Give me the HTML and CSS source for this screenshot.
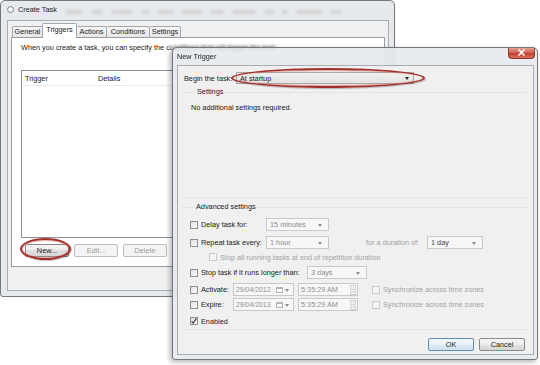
FILE: index.html
```html
<!DOCTYPE html>
<html lang="en">
<head>
	<meta charset="UTF-8">
	<title>Create Task - New Trigger</title>
	<link rel="stylesheet" href="styles.css">
</head>
<body>
<div class="desk">

	<div class="win create">
		<div class="titlebar">
			<span class="app-icon"></span>
			<span class="title">Create Task</span>
			<div class="glass-noise"><i></i><i></i><i></i><i></i><i></i><i></i><i></i><i></i><i></i><i></i><i></i><i></i></div>
		</div>
		<div class="client">
			<ul class="tabs">
				<li class="tab t-general">General</li>
				<li class="tab t-triggers on">Triggers</li>
				<li class="tab t-actions">Actions</li>
				<li class="tab t-conditions">Conditions</li>
				<li class="tab t-settings">Settings</li>
			</ul>
			<div class="tab-panel">
				<p class="hint">When you create a task, you can specify the conditions that will trigger the task.</p>
				<div class="list">
					<div class="list-head"><span class="col-trigger">Trigger</span><span class="col-details">Details</span><span>Status</span></div>
				</div>
				<div class="list-btns">
					<button class="btn">New...</button>
					<button class="btn off">Edit...</button>
					<button class="btn off">Delete</button>
				</div>
			</div>
		</div>
	</div>

	<div class="glass-edge"></div>

	<div class="win trigger">
		<div class="titlebar"><span class="title">New Trigger</span></div>
		<span class="close-btn">
			<svg viewBox="0 0 27 11" width="27" height="11"><path d="M10.5 2.5 L16.5 8.5 M16.5 2.5 L10.5 8.5" stroke="#fff" stroke-width="1.6" fill="none"/></svg>
		</span>
		<div class="client">
			<div class="begin-row">
				<span class="begin-label">Begin the task:</span>
				<div class="combo combo-begin"><span>At startup</span><i class="arrow"></i></div>
			</div>

			<fieldset class="group group-settings">
				<legend>Settings</legend>
				<p class="note">No additional settings required.</p>
			</fieldset>

			<fieldset class="group group-adv">
				<legend>Advanced settings</legend>

				<div class="row r1">
					<label class="opt lab-76"><span class="check"></span>Delay task for:</label>
					<div class="combo off w63"><span>15 minutes</span><i class="arrow"></i></div>
				</div>

				<div class="row r2">
					<label class="opt lab-76"><span class="check"></span>Repeat task every:</label>
					<div class="combo off w63"><span>1 hour</span><i class="arrow"></i></div>
					<span class="dim duration">for a duration of:</span>
					<div class="combo off w56"><span class="dark">1 day</span><i class="arrow"></i></div>
				</div>

				<div class="row r3">
					<label class="opt sub dim"><span class="check off"></span>Stop all running tasks at end of repetition duration</label>
				</div>

				<div class="row r4">
					<label class="opt lab-117"><span class="check"></span>Stop task if it runs longer than:</label>
					<div class="combo off w60"><span>3 days</span><i class="arrow"></i></div>
				</div>

				<div class="row r5">
					<label class="opt lab-43"><span class="check"></span>Activate:</label>
					<div class="field date"><span>29/04/2012</span><i class="cal"></i><i class="arrow"></i></div>
					<div class="field time"><span>5:35:29 AM</span><i class="spin"><b></b><b></b></i></div>
					<label class="opt sync dim"><span class="check off"></span>Synchronize across time zones</label>
				</div>

				<div class="row r6">
					<label class="opt lab-43"><span class="check"></span>Expire:</label>
					<div class="field date"><span>29/04/2013</span><i class="cal"></i><i class="arrow"></i></div>
					<div class="field time"><span>5:35:29 AM</span><i class="spin"><b></b><b></b></i></div>
					<label class="opt sync dim"><span class="check off"></span>Synchronize across time zones</label>
				</div>

				<div class="row r7">
					<label class="opt"><span class="check"><svg viewBox="0 0 8 8" width="8" height="8"><path d="M1.6 4.3 L3.2 6.1 L6.4 1.4" fill="none" stroke="#333" stroke-width="1.1"/></svg></span>Enabled</label>
				</div>
			</fieldset>

			<div class="dlg-btns">
				<button class="btn default">OK</button>
				<button class="btn">Cancel</button>
			</div>
		</div>
	</div>

	<span class="mark mark-new"></span>
	<span class="mark mark-begin"></span>
</div>
</body>
</html>
```

FILE: styles.css
```css
* {
	margin: 0;
	padding: 0;
	box-sizing: border-box;
}

body {
	width: 540px;
	height: 365px;
	overflow: hidden;
	background: #fff;
	font-family: 'Liberation Sans', Arial, sans-serif;
	font-size: 7.3px;
	color: #1a1a1a;
}

.desk {
	position: relative;
	width: 540px;
	height: 365px;
}

/* windows */
.win {
	position: absolute;
	display: flex;
	flex-direction: column;
	border: 1px solid #74787c;
	border-radius: 5px 5px 3px 3px;
	background: #e7eaed;
}

.titlebar {
	position: relative;
	display: flex;
	align-items: center;
	flex: none;
}

.title {
	white-space: nowrap;
	color: #1a1a1a;
}

.client {
	flex: 1;
	border: 1px solid #a9adb2;
	background: #f0f0f0;
}

/* create task */
.create {
	left: 0;
	top: 0;
	width: 395px;
	height: 297px;
	padding: 0 5px 5px 6px;
}

.create .titlebar {
	height: 19px;
	padding-bottom: 3px;
}

.app-icon {
	width: 7px;
	height: 7px;
	border: 1px solid #8a8a8a;
	border-radius: 50%;
	background: radial-gradient(circle, #fff 30%, #d0d0d0);
	margin-right: 4px;
}

.glass-noise {
	position: absolute;
	left: 58px;
	top: 9px;
	display: flex;
	gap: 8px;
}

.glass-noise i {
	display: block;
	height: 4px;
	width: 18px;
	border-radius: 2px;
	background: #d3d3d3;
	filter: blur(1.6px);
}

.glass-noise i:nth-child(2) { width: 12px; }
.glass-noise i:nth-child(3) { width: 22px; }
.glass-noise i:nth-child(4) { width: 9px; }
.glass-noise i:nth-child(5) { width: 16px; }
.glass-noise i:nth-child(6) { width: 20px; }
.glass-noise i:nth-child(7) { width: 14px; }
.glass-noise i:nth-child(8) { width: 24px; }
.glass-noise i:nth-child(9) { width: 10px; }
.glass-noise i:nth-child(10) { width: 6px; }
.glass-noise i:nth-child(11) { width: 26px; }
.glass-noise i:nth-child(12) { width: 12px; }

.create .client {
	display: flex;
	flex-direction: column;
	padding: 3px 3px 0 3px;
}

.tabs {
	list-style: none;
	display: flex;
	align-items: flex-end;
	height: 13px;
	padding-left: 1px;
}

.tab {
	height: 11px;
	line-height: 10px;
	text-align: center;
	border: 1px solid #a3a7ac;
	border-bottom: 0;
	border-left-width: 0;
	border-radius: 2px 2px 0 0;
	background: linear-gradient(#f7f7f7, #e6e6e6);
	white-space: nowrap;
}

.t-general { width: 31px; border-left-width: 1px; }
.t-triggers { width: 35px; }
.t-actions { width: 30px; }
.t-conditions { width: 43px; }
.t-settings { width: 31px; }

.tab.on {
	position: relative;
	z-index: 1;
	height: 15px;
	margin-bottom: -1px;
	line-height: 12px;
	background: #fff;
	border-left-width: 1px;
	margin-left: -1px;
}

.tab-panel {
	height: 230px;
	border: 1px solid #9a9ea3;
	background: #fff;
	padding: 5px 9px 0 9px;
}

.hint {
	line-height: 10px;
	white-space: nowrap;
}

.list {
	margin-top: 17px;
	height: 168px;
	border: 1px solid #8c9096;
	background: #fff;
}

.list-head {
	display: flex;
	height: 15px;
	align-items: center;
	padding-left: 3px;
	border-bottom: 1px solid #ececec;
}

.col-trigger { width: 73px; }
.col-details { width: 200px; }

.list-btns {
	display: flex;
	gap: 5px;
	margin: 6px 0 0 4px;
}

.btn {
	width: 44px;
	height: 13px;
	font: inherit;
	color: #1e1e1e;
	border: 1px solid #8a8a8a;
	border-radius: 2px;
	background: linear-gradient(#f6f6f6, #ececec 50%, #e0e0e0 50%, #d8d8d8);
}

.btn.off {
	color: #9d9d9d;
	border-color: #bdbdbd;
	background: #f4f4f4;
}

.btn.default {
	border-color: #5f8db5;
	background: linear-gradient(#f4f9fc, #e8f1f8 50%, #dbe8f2 50%, #d2e2ee);
}

/* glass glow over the text behind the dialog */
.glass-edge {
	position: absolute;
	left: 168px;
	top: 42px;
	width: 110px;
	height: 6px;
	backdrop-filter: blur(1.5px);
}

/* new trigger */
.trigger {
	left: 172px;
	top: 47px;
	width: 366px;
	height: 313px;
	padding: 0 3px 4px 4px;
	background: rgba(228, 232, 236, .86);
	backdrop-filter: blur(1.6px);
	box-shadow: -2px 2px 5px rgba(0, 0, 0, .3);
}

.trigger .titlebar {
	height: 17px;
}

.close-btn {
	position: absolute;
	left: 335px;
	top: 0;
	width: 27px;
	height: 11px;
	border: 1px solid #8b3a33;
	border-top: 0;
	border-radius: 0 0 4px 4px;
	background: linear-gradient(#e6a195, #cf5a49 50%, #c03c2a 51%, #d7705c);
}

.close-btn svg {
	display: block;
	margin: -1px 0 0 -1px;
}

.trigger .client {
	display: flex;
	flex-direction: column;
	padding: 6px 6px 0 3px;
}

.begin-row {
	display: flex;
	align-items: center;
	height: 12px;
	padding-left: 3px;
}

.begin-label {
	width: 52px;
	white-space: nowrap;
}

.combo {
	position: relative;
	display: flex;
	align-items: center;
	height: 13px;
	padding-left: 3px;
	border: 1px solid #abadb3;
	background: #fff;
	white-space: nowrap;
}

.combo .arrow,
.field .arrow {
	position: absolute;
	right: 6px;
	top: 5px;
	width: 0;
	height: 0;
	border-left: 2.5px solid transparent;
	border-right: 2.5px solid transparent;
	border-top: 3px solid #222;
}

.combo-begin {
	width: 178px;
	height: 12px;
	border-color: #a9a9a9;
	background: linear-gradient(#f0f0f0, #e3e3e3);
}

.combo-begin .arrow {
	top: 4px;
	right: 4px;
}

.combo.off {
	color: #8a8a8a;
	border-color: #c7c9cc;
	background: #f7f7f7;
}

.combo.off .arrow,
.field .arrow {
	border-top-color: #8c8c8c;
}

.combo .dark {
	color: #444;
}

.w63 { width: 63px; }
.w60 { width: 60px; }
.w56 { width: 56px; }

.group {
	border: 1px solid #e1e3e6;
	border-left-color: transparent;
	border-right-color: transparent;
	min-inline-size: 0;
}

.group legend {
	margin-left: 4px;
	padding: 0 2px;
	line-height: 10px;
}

.group-settings {
	margin-top: 3px;
	height: 111px;
	padding: 6px 0 0 9px;
}

.note {
	line-height: 10px;
}

.group-adv {
	margin-top: 4px;
	padding: 6px 0 3px 8px;
}

.row {
	display: flex;
	align-items: center;
	height: 13px;
}

.r2 { margin-top: 5px; }
.r3 { margin-top: 3px; height: 10px; }
.r4 { margin-top: 4px; }
.r5 { margin-top: 4px; }
.r6 { margin-top: 2px; }
.r7 { margin-top: 5px; height: 10px; }

.opt {
	display: flex;
	align-items: center;
	white-space: nowrap;
}

.lab-76 { width: 76px; }
.lab-117 { width: 117px; }
.lab-43 { width: 43px; }

.sub { margin-left: 19px; }
.sync { margin-left: 14px; }

.dim {
	color: #a2a2a2;
}

.check {
	width: 8px;
	height: 8px;
	margin-right: 3px;
	border: 1px solid #8e9092;
	background: linear-gradient(135deg, #dedede, #fbfbfb);
	flex: none;
}

.check svg {
	display: block;
	margin: -1px 0 0 -1px;
}

.check.off {
	border-color: #c9cbcd;
	background: #f5f5f5;
}

.duration {
	margin-left: 37px;
	width: 61px;
	white-space: nowrap;
}

.field {
	position: relative;
	display: flex;
	align-items: center;
	height: 13px;
	padding-left: 2px;
	color: #8f8f8f;
	border: 1px solid #c7c9cc;
	background: #f7f7f7;
	white-space: nowrap;
}

.date {
	width: 61px;
}

.date span {
	font-size: 6.9px;
}

.time {
	width: 60px;
	margin-left: 4px;
}

.cal {
	position: absolute;
	right: 10px;
	top: 3px;
	width: 7px;
	height: 6px;
	border: 1px solid #b5b5b5;
	border-top-width: 2px;
	background: #fafafa;
}

.field .arrow {
	right: 4px;
}

.spin {
	position: absolute;
	right: 1px;
	top: 1px;
	display: flex;
	flex-direction: column;
	gap: 1px;
}

.spin b {
	display: block;
	width: 6px;
	height: 4.5px;
	border: 1px solid #cfd1d3;
	background: #f0f0f0;
}

.dlg-btns {
	display: flex;
	justify-content: flex-end;
	gap: 5px;
	margin: 8px 2px 0 0;
}

.dlg-btns .btn {
	width: 46px;
}

/* red annotation ovals */
.mark {
	position: absolute;
	border: 2px solid #a3302c;
	border-radius: 50%;
	box-shadow: inset 0 0 1px 1px rgba(214, 120, 110, .55), 1px 1px 1px rgba(0, 0, 0, .25);
}

.mark-new {
	left: 20px;
	top: 238px;
	width: 51px;
	height: 22px;
}

.mark-begin {
	left: 231px;
	top: 68px;
	width: 194px;
	height: 20px;
}
```
